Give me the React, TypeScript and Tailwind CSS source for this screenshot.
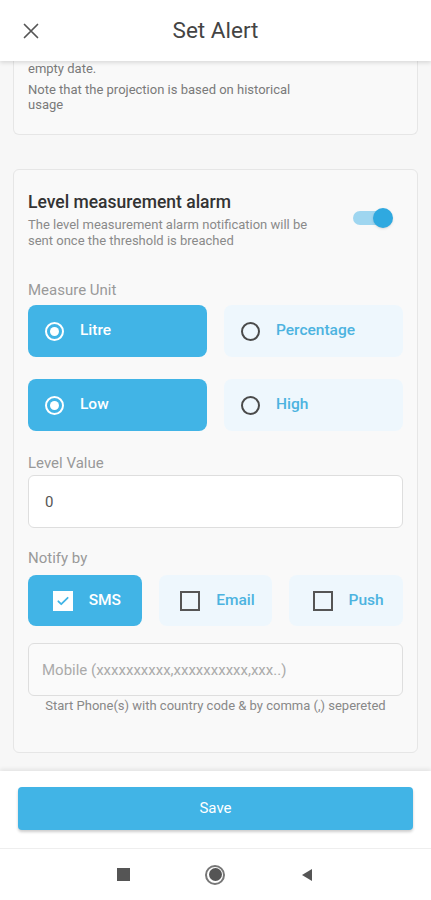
import { useState } from "react";

const BLUE = "bg-[#41b4e6]";

function RadioOption({
  label,
  selected,
  onClick,
}: {
  label: string;
  selected: boolean;
  onClick: () => void;
}) {
  return (
    <button
      onClick={onClick}
      className={`flex h-[52px] items-center rounded-lg pl-[17px] ${selected ? BLUE : "bg-[#eef7fd]"}`}
    >
      {selected ? (
        <span className="flex h-[19px] w-[19px] items-center justify-center rounded-full border-2 border-white">
          <span className="h-[9px] w-[9px] rounded-full bg-white" />
        </span>
      ) : (
        <span className="h-[19px] w-[19px] rounded-full border-2 border-[#4a4a4a]" />
      )}
      <span
        className={`ml-[16px] text-[15.5px] font-medium ${selected ? "text-white" : "text-[#4cb3e0]"}`}
      >
        {label}
      </span>
    </button>
  );
}

function CheckOption({
  label,
  checked,
  onClick,
}: {
  label: string;
  checked: boolean;
  onClick: () => void;
}) {
  return (
    <button
      onClick={onClick}
      className={`flex h-[51px] items-center justify-center gap-[16px] rounded-lg pl-[4px] ${checked ? BLUE : "bg-[#eef7fd]"}`}
    >
      {checked ? (
        <span className="flex h-[20px] w-[20px] items-center justify-center bg-white">
          <svg width="14" height="14" viewBox="0 0 24 24" fill="none">
            <path
              d="M4 12.5l5 5L20 6.5"
              stroke="#41b4e6"
              strokeWidth="3"
              strokeLinecap="round"
              strokeLinejoin="round"
            />
          </svg>
        </span>
      ) : (
        <span className="h-[20px] w-[20px] border-2 border-[#555]" />
      )}
      <span
        className={`text-[15.5px] font-medium ${checked ? "text-white" : "text-[#4cb3e0]"}`}
      >
        {label}
      </span>
    </button>
  );
}

export default function App() {
  const [unit, setUnit] = useState("litre");
  const [level, setLevel] = useState("low");
  const [notify, setNotify] = useState({ sms: true, email: false, push: false });
  const [enabled, setEnabled] = useState(true);

  return (
    <div
      className="flex h-[900px] w-full flex-col overflow-hidden bg-[#f7f7f7]"
      style={{ fontFamily: "Roboto, 'Noto Sans', sans-serif" }}
    >
      {/* header */}
      <header className="relative z-10 flex h-[61px] shrink-0 items-center justify-center bg-white shadow-[0_2px_4px_rgba(0,0,0,0.12)]">
        <button className="absolute left-[23px] top-[23px]" aria-label="Close">
          <svg width="16" height="16" viewBox="0 0 16 16">
            <path
              d="M1.5 1.5L14.5 14.5M14.5 1.5L1.5 14.5"
              stroke="#555"
              strokeWidth="1.7"
              strokeLinecap="round"
            />
          </svg>
        </button>
        <h1 className="text-[22.5px] text-[#444]">Set Alert</h1>
      </header>

      {/* content */}
      <div className="flex-1 overflow-hidden px-[13px]">
        <div className="rounded-b-md border border-t-0 border-[#e6e6e6] bg-[#f9f9f9] px-[14px] pb-[22px] text-[13px] text-[#7a7a7a]">
          <p className="leading-[16px]">empty date.</p>
          <p className="mt-[5px] w-[280px] leading-[15px]">
            Note that the projection is based on historical usage
          </p>
        </div>

        <section className="mt-[34px] rounded-md border border-[#e6e6e6] bg-[#f9f9f9] px-[14px] pb-[38px] pt-[21px]">
          <div className="flex items-start justify-between">
            <div>
              <h2 className="text-[17.5px] font-medium leading-[22px] text-[#333]">
                Level measurement alarm
              </h2>
              <p className="mt-[4px] w-[300px] text-[13px] leading-[16px] text-[#8a8a8a]">
                The level measurement alarm notification will be sent once the
                threshold is breached
              </p>
            </div>
            <button
              onClick={() => setEnabled(!enabled)}
              className="relative mr-[14px] mt-[20px] h-[14px] w-[36px] rounded-full bg-[#9fd6f0]"
              aria-label="toggle"
            >
              <span
                className={`absolute top-[-3px] h-[20px] w-[20px] rounded-full bg-[#2fa9e0] shadow ${enabled ? "right-[-4px]" : "left-[-4px]"}`}
              />
            </button>
          </div>

          <p className="mt-[32px] text-[15px] leading-[18px] text-[#999]">
            Measure Unit
          </p>
          <div className="mt-[6px] grid grid-cols-2 gap-[17px]">
            <RadioOption
              label="Litre"
              selected={unit === "litre"}
              onClick={() => setUnit("litre")}
            />
            <RadioOption
              label="Percentage"
              selected={unit === "percentage"}
              onClick={() => setUnit("percentage")}
            />
          </div>
          <div className="mt-[22px] grid grid-cols-2 gap-[17px]">
            <RadioOption
              label="Low"
              selected={level === "low"}
              onClick={() => setLevel("low")}
            />
            <RadioOption
              label="High"
              selected={level === "high"}
              onClick={() => setLevel("high")}
            />
          </div>

          <p className="mt-[23px] text-[15px] leading-[18px] text-[#999]">
            Level Value
          </p>
          <input
            defaultValue="0"
            className="mt-[3px] h-[53px] w-full rounded-md border border-[#dedede] bg-white px-[16px] text-[15px] text-[#555] outline-none"
          />

          <p className="mt-[21px] text-[15px] leading-[18px] text-[#999]">
            Notify by
          </p>
          <div className="mt-[8px] grid grid-cols-3 gap-[17px]">
            <CheckOption
              label="SMS"
              checked={notify.sms}
              onClick={() => setNotify({ ...notify, sms: !notify.sms })}
            />
            <CheckOption
              label="Email"
              checked={notify.email}
              onClick={() => setNotify({ ...notify, email: !notify.email })}
            />
            <CheckOption
              label="Push"
              checked={notify.push}
              onClick={() => setNotify({ ...notify, push: !notify.push })}
            />
          </div>

          <input
            placeholder="Mobile (xxxxxxxxxx,xxxxxxxxxx,xxx..)"
            className="mt-[17px] h-[53px] w-full rounded-md border border-[#dedede] bg-[#fafafa] px-[13px] text-[15px] text-[#555] outline-none placeholder:text-[#aaa]"
          />
          <p className="mt-[2px] text-center text-[13px] leading-[16px] text-[#888]">
            Start Phone(s) with country code &amp; by comma (,) sepereted
          </p>
        </section>
      </div>

      {/* footer */}
      <div className="shrink-0 bg-white px-[18px] pb-[18px] pt-[16px] shadow-[0_-2px_4px_rgba(0,0,0,0.08)]">
        <button
          className={`h-[43px] w-full rounded ${BLUE} text-[15px] text-white shadow-[0_2px_3px_rgba(0,0,0,0.2)]`}
        >
          Save
        </button>
      </div>

      {/* android nav */}
      <nav className="flex h-[52px] shrink-0 items-center justify-center gap-[75px] border-t border-[#eeeeee] bg-white">
        <span className="h-[13px] w-[13px] bg-[#555]" />
        <span className="flex h-[20px] w-[20px] items-center justify-center rounded-full border-2 border-[#777]">
          <span className="h-[13px] w-[13px] rounded-full bg-[#555]" />
        </span>
        <svg width="14" height="14" viewBox="0 0 14 14">
          <path d="M12 1L12 13L2 7Z" fill="#555" />
        </svg>
      </nav>
    </div>
  );
}
